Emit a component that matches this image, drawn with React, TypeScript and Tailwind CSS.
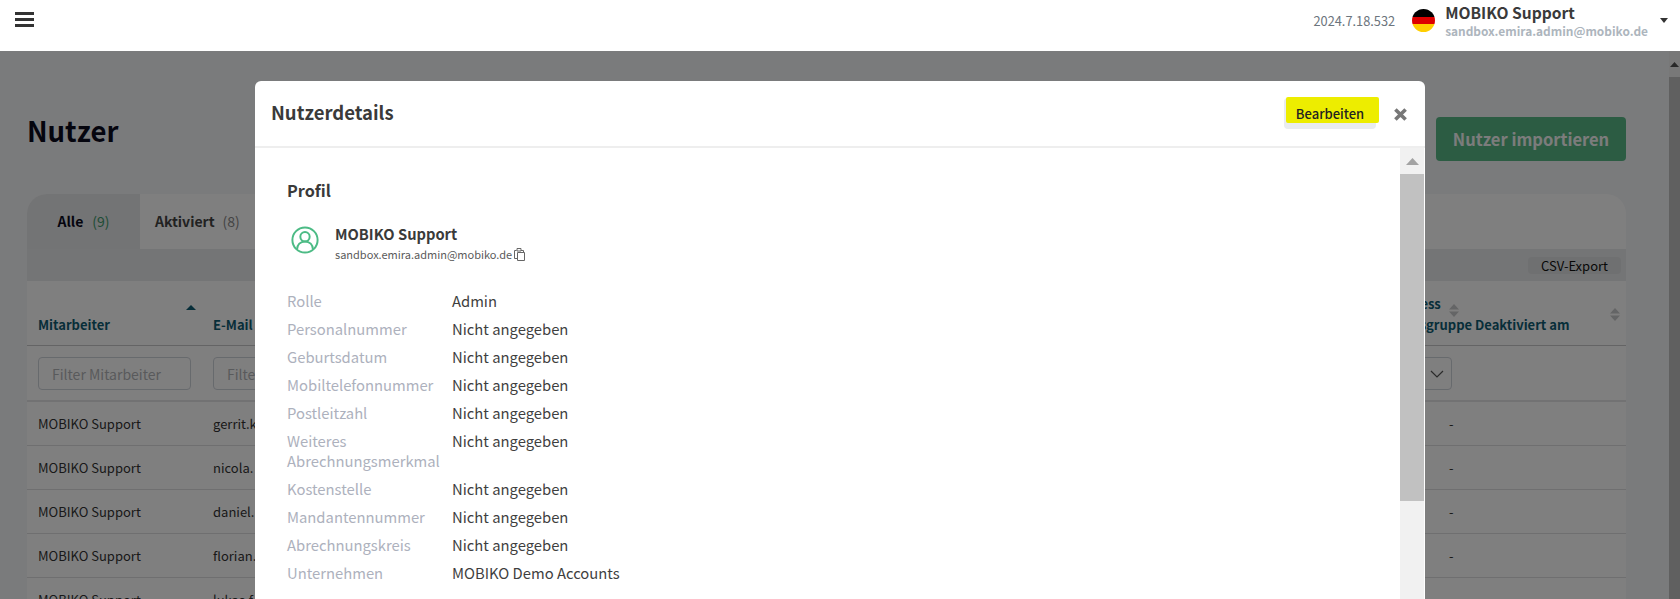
const details = [
  ["Rolle", "Admin"],
  ["Personalnummer", "Nicht angegeben"],
  ["Geburtsdatum", "Nicht angegeben"],
  ["Mobiltelefonnummer", "Nicht angegeben"],
  ["Postleitzahl", "Nicht angegeben"],
  ["Weiteres Abrechnungsmerkmal", "Nicht angegeben"],
  ["Kostenstelle", "Nicht angegeben"],
  ["Mandantennummer", "Nicht angegeben"],
  ["Abrechnungskreis", "Nicht angegeben"],
  ["Unternehmen", "MOBIKO Demo Accounts"],
];

const rows = ["gerrit.k", "nicola.", "daniel.", "florian.", "lukas.f"];

function SortArrows() {
  return (
    <svg width="10" height="13" viewBox="0 0 10 13" className="shrink-0 fill-[#c9cacc]">
      <path d="M5 0l5 5.5H0z" />
      <path d="M5 13L0 7.5h10z" />
    </svg>
  );
}

function ClipboardIcon() {
  return (
    <svg width="12" height="13" viewBox="0 0 12 13" fill="none" stroke="#666" strokeWidth="1" className="ml-[2px]">
      <path d="M2.5 2.5H.5v8h2.5" />
      <path d="M3 .5h4v2.5H3z" />
      <path d="M3.5 4.5h7v8h-7z" />
      <path d="M7 2.5h2.5v2" />
    </svg>
  );
}

function UserIcon() {
  return (
    <svg width="28" height="28" viewBox="0 0 30 30" fill="none" stroke="#4cbb85" strokeWidth="2.1" className="mt-[3px] ml-[4px] shrink-0">
      <circle cx="15" cy="15" r="13.5" />
      <circle cx="15" cy="11.5" r="5" />
      <path d="M6.5 25c0-5 3.5-8.5 8.5-8.5s8.5 3.5 8.5 8.5" />
    </svg>
  );
}

function Flag() {
  return (
    <div className="flex h-[23px] w-[23px] flex-col overflow-hidden rounded-full">
      <div className="h-1/3 bg-black" />
      <div className="h-1/3 bg-[#dd0000]" />
      <div className="h-1/3 bg-[#ffce00]" />
    </div>
  );
}

function Page() {
  return (
    <div className="flex min-h-0 flex-1 bg-[#f5f6f8]">
      <div className="min-w-0 flex-1 pl-[27px] pr-[43px]">
        <div className="flex h-[143px] items-start justify-between pt-[66px]">
          <h1 className="-mt-[1px] text-[27.5px] leading-[28px] font-bold text-[#0b0b1c]">Nutzer</h1>
          <button className="h-[44px] w-[190px] rounded bg-[#58b987] text-[16.5px] leading-[44px] font-bold text-[#f8f8f8]">
            Nutzer importieren
          </button>
        </div>
        <div className="overflow-hidden rounded-t-[20px] bg-white">
          <div className="flex h-[55px] items-center">
            <div className="flex h-full w-[113px] items-center justify-center gap-[9px] bg-[#e6e8ea] text-[14px]">
              <span className="font-bold text-[#0b0b1c]">Alle</span>
              <span className="text-[#3f9a6c]">(9)</span>
            </div>
            <div className="flex h-full items-center gap-2 px-[15px] text-[14px]">
              <span className="font-bold text-[#444]">Aktiviert</span>
              <span className="text-[#888]">(8)</span>
            </div>
          </div>
          <div className="flex h-[32px] items-center justify-end bg-[#e8eaec] pr-[5px]">
            <button className="h-[17px] w-[93px] rounded bg-[#dfe1e3] text-[13px] leading-[17px] text-[#111]">
              CSV-Export
            </button>
          </div>
          <div className="flex h-[65px] items-end border-b border-[#c8c9cb] pb-[10px] text-[13px] leading-[21px] font-bold text-[#0f5c73]">
            <div className="relative w-[186px] pl-[11px]">
              Mitarbeiter
              <svg width="10" height="5" viewBox="0 0 10 5" className="absolute top-[-9px] right-[17px] fill-[#0f5c73]">
                <path d="M5 0l5 5H0z" />
              </svg>
            </div>
            <div className="flex-1">E-Mail</div>
            <div className="relative w-[98px]">
              <span className="-ml-[5px]">Mailadress</span>
              <br />
              Zugriffsgruppe
              <span className="absolute top-[11px] left-[72px]">
                <SortArrows />
              </span>
            </div>
            <div className="relative w-[151px]">
              Deaktiviert am
              <span className="absolute bottom-[14px] left-[135px]">
                <SortArrows />
              </span>
            </div>
          </div>
          <div className="flex h-[56px] items-center border-b-2 border-[#e4e5e7] pt-[1px] text-[14px]">
            <div className="w-[186px] pl-[11px]">
              <input
                readOnly
                placeholder="Filter Mitarbeiter"
                className="h-[33px] w-[153px] rounded border border-[#ced4da] px-[13px] placeholder:text-[#b3b5b8]"
              />
            </div>
            <input
              readOnly
              placeholder="Filter"
              className="h-[33px] w-[153px] rounded border border-[#ced4da] px-[13px] placeholder:text-[#b3b5b8]"
            />
            <div className="flex flex-1 justify-end pr-[174px]">
              <div className="flex h-[33px] w-[120px] items-center justify-end rounded border border-[#ced4da] pr-[7px]">
                <svg width="14" height="8" viewBox="0 0 14 8" fill="none" stroke="#555" strokeWidth="1.2">
                  <path d="M1 1l6 6 6-6" />
                </svg>
              </div>
            </div>
          </div>
          {rows.map((mail) => (
            <div key={mail} className="flex h-[44px] items-center border-b border-[#dedfe1] pt-[1px] text-[13px] text-[#333]">
              <div className="w-[186px] pl-[11px]">MOBIKO Support</div>
              <div className="flex-1">{mail}</div>
              <div className="w-[177px]">-</div>
            </div>
          ))}
        </div>
      </div>
      <div className="flex w-[11px] flex-col bg-[#f1f1f1]">
        <div className="flex h-[26px] shrink-0 items-center justify-center">
          <svg width="9" height="5" viewBox="0 0 9 5" className="fill-[#505050]">
            <path d="M4.5 0L9 5H0z" />
          </svg>
        </div>
        <div className="flex-1 bg-[#c1c1c1]" />
      </div>
    </div>
  );
}

function Modal() {
  return (
    <div className="absolute top-[81px] left-[255px] z-30 h-[600px] w-[1170px] rounded-t-[6px] bg-white">
      <div className="flex h-[67px] items-start border-b-2 border-[#eeeeee] pl-[16px]">
        <h2 className="flex-1 pt-[19px] text-[18.5px] leading-[24px] font-bold text-[#3a3a3a]">Nutzerdetails</h2>
        <div className="relative mt-[17px] mr-[18px] h-[31px] w-[92px] rounded bg-[#e9ecef]">
          <span className="absolute top-[-1px] left-[2px] block h-[26px] w-[93px] rounded-[2px] bg-[#eded00] pt-[5px] pr-[5px] text-center text-[13px] leading-[24px] font-medium text-[#222]">
            Bearbeiten
          </span>
        </div>
        <svg width="13" height="13" viewBox="0 0 13 13" className="mt-[27px] mr-[18px] stroke-[#777]" strokeWidth="3.6">
          <path d="M1.4 1.4l10.2 10.2M11.6 1.4L1.4 11.6" />
        </svg>
      </div>
      <div className="flex h-[533px]">
        <div className="min-w-0 flex-1 pt-[30px] pl-[32px]">
          <h3 className="text-[16.2px] leading-[24px] font-bold text-[#3a3a3a]">Profil</h3>
          <div className="mt-[21px] flex items-start">
            <UserIcon />
            <div className="ml-[16px]">
              <div className="text-[14.7px] leading-[22px] font-bold text-[#3a3a3a]">MOBIKO Support</div>
              <div className="flex items-center text-[11px] leading-[18px] text-[#5a5a5a]">
                sandbox.emira.admin@mobiko.de
                <ClipboardIcon />
              </div>
            </div>
          </div>
          <div className="mt-[28px] flex flex-col gap-[8px] text-[14.8px] leading-[20px]">
            {details.map(([label, value]) => (
              <div key={label} className="flex">
                <div className="w-[165px] shrink-0 pr-[2px] text-[#adb1bd]">{label}</div>
                <div className="text-[#3f3f3f]">{value}</div>
              </div>
            ))}
          </div>
        </div>
        <div className="mr-px flex w-[24px] flex-col bg-[#f1f1f1]">
          <div className="flex h-[26px] shrink-0 items-center justify-center">
            <svg width="13" height="7" viewBox="0 0 13 7" className="fill-[#a3a3a3]">
              <path d="M6.5 0L13 7H0z" />
            </svg>
          </div>
          <div className="h-[327px] bg-[#c1c1c1]" />
        </div>
      </div>
    </div>
  );
}

export default function App() {
  return (
    <div className="relative flex h-[599px] flex-col overflow-hidden font-['Noto_Sans_CJK_JP','Noto_Sans',sans-serif]">
      <header className="relative z-20 flex h-[51px] shrink-0 items-start justify-between bg-white">
        <div className="mt-[12px] ml-[15px] flex w-[19px] flex-col gap-[3px]">
          <span className="h-[3px] bg-[#333]" />
          <span className="h-[3px] bg-[#333]" />
          <span className="h-[3px] bg-[#333]" />
        </div>
        <div className="flex items-start">
          <span className="mt-[11px] mr-[17px] text-[12.8px] leading-[20px] text-[#6c757d]">2024.7.18.532</span>
          <div className="mt-[9px] mr-[10px]">
            <Flag />
          </div>
          <div className="mr-[12px]">
            <div className="text-[15.6px] leading-[24px] font-bold text-[#3a3a3a]">MOBIKO Support</div>
            <div className="-mt-[2px] text-[11.9px] leading-[18px] font-bold text-[#adb5bd]">sandbox.emira.admin@mobiko.de</div>
          </div>
          <svg width="8" height="5" viewBox="0 0 8 5" className="mt-[18px] mr-[12px] fill-[#333]">
            <path d="M0 0h8L4 5z" />
          </svg>
        </div>
      </header>
      <Page />
      <div className="absolute inset-x-0 top-[51px] bottom-0 z-10 bg-black/50" />
      <Modal />
    </div>
  );
}
